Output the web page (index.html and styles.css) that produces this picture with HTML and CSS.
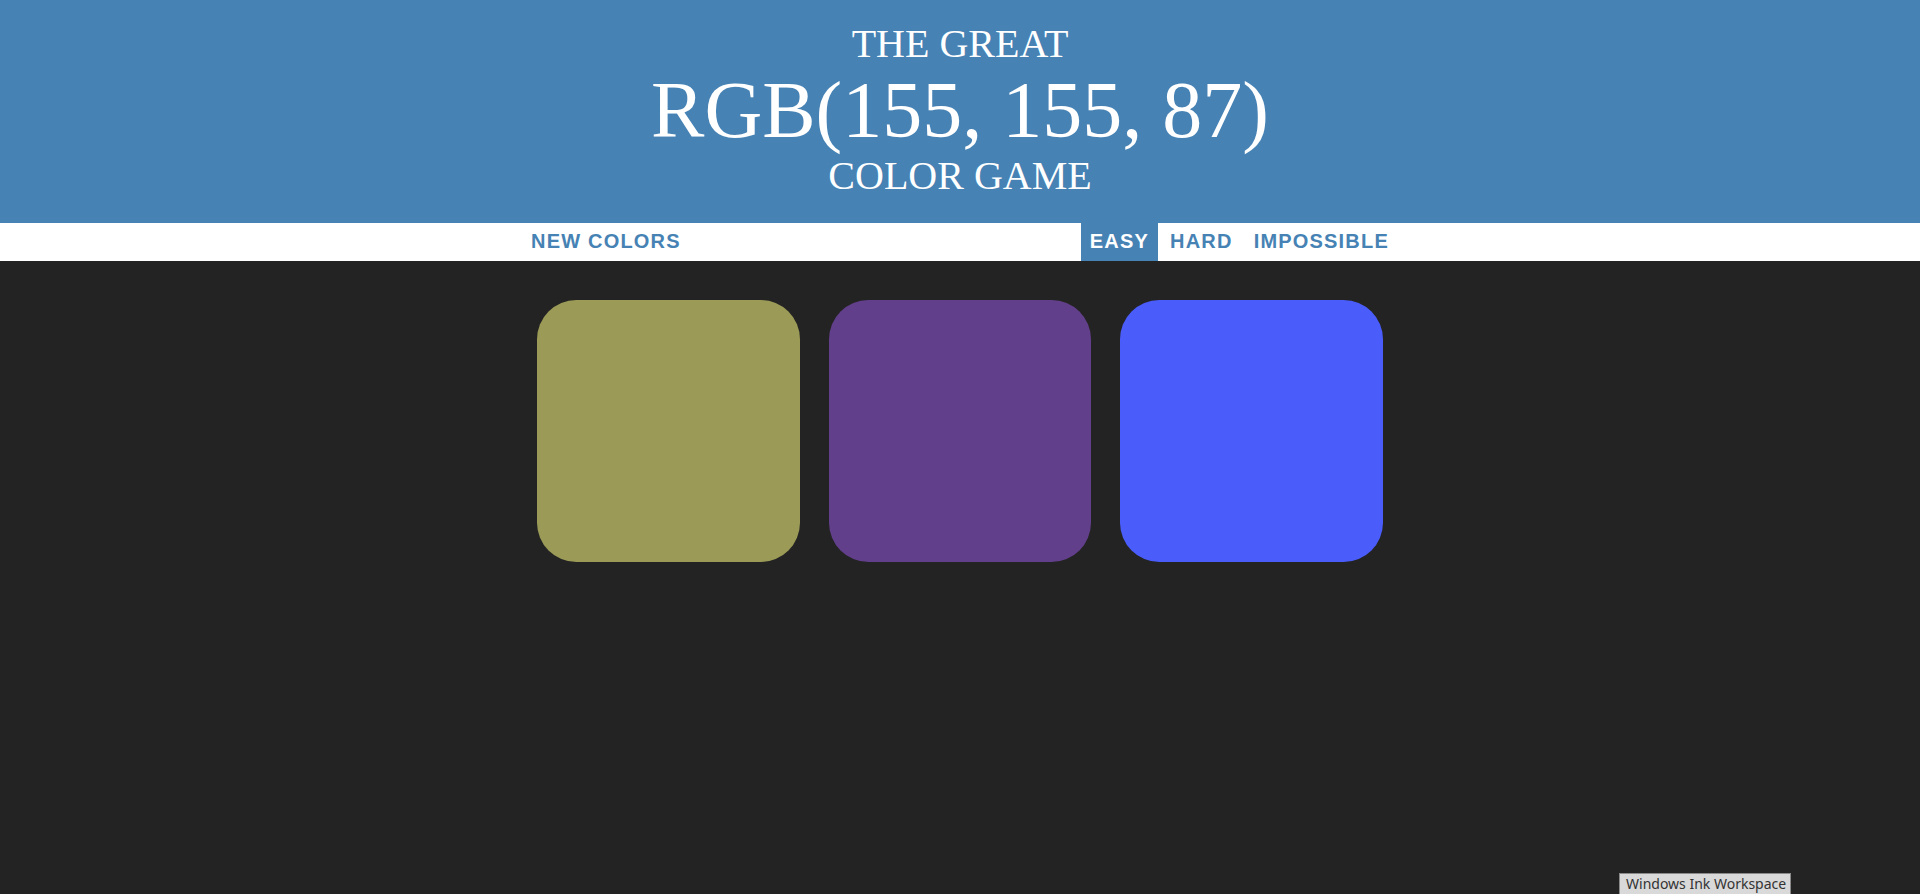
FILE: index.html
```html
<!DOCTYPE html>
<html lang="en">
<head>
<meta charset="utf-8">
<title>Color Game</title>
<link rel="stylesheet" href="styles.css">
</head>
<body>
<header class="banner">
  <div class="title-top">The Great</div>
  <div class="title-rgb">RGB(155, 155, 87)</div>
  <div class="title-bottom">Color Game</div>
</header>
<nav class="stripe">
  <div class="stripe-inner">
    <button class="btn">New Colors</button>
    <span class="message"></span>
    <div class="modes">
      <button class="btn btn-selected">Easy</button>
      <button class="btn">Hard</button>
      <button class="btn">Impossible</button>
    </div>
  </div>
</nav>
<main class="board">
  <div class="square" style="background: rgb(155, 155, 87);"></div>
  <div class="square" style="background: rgb(98, 63, 138);"></div>
  <div class="square" style="background: rgb(74, 93, 251);"></div>
</main>
<div class="sys-tooltip">Windows Ink Workspace</div>
</body>
</html>
```
FILE: styles.css
```css
html, body {
  margin: 0;
  padding: 0;
}
body {
  background: #232323;
  height: 894px;
  overflow: hidden;
  font-family: "Liberation Sans", Arial, sans-serif;
}
.banner {
  background: #4682b4;
  color: #fff;
  text-align: center;
  text-transform: uppercase;
  font-family: "Liberation Serif", "Times New Roman", serif;
  font-weight: normal;
  padding: 22px 0 25px;
}
.title-top,
.title-bottom {
  font-size: 40px;
  line-height: 44px;
}
.title-rgb {
  font-size: 80px;
  line-height: 88px;
}
.stripe {
  background: #fff;
  height: 38px;
}
.stripe-inner {
  max-width: 875px;
  height: 100%;
  margin: 0 auto;
  display: flex;
  justify-content: space-between;
  align-items: stretch;
}
.modes {
  display: flex;
  gap: 4px;
}
.btn {
  font-family: "Liberation Sans", Arial, sans-serif;
  font-size: 20px;
  font-weight: 700;
  letter-spacing: 1.2px;
  text-transform: uppercase;
  color: #4682b4;
  background: none;
  border: none;
  outline: none;
  height: 100%;
  padding: 0 8.5px 2px;
  margin: 0;
}
.btn-selected {
  background: #4682b4;
  color: #fff;
}
.board {
  max-width: 875px;
  margin: 24px auto 0;
  display: flex;
  flex-wrap: wrap;
}
.square {
  width: 30%;
  aspect-ratio: 1 / 1;
  margin: 1.66%;
  border-radius: 15%;
}
.sys-tooltip {
  position: fixed;
  left: 1619px;
  top: 873px;
  width: 172px;
  height: 24px;
  box-sizing: border-box;
  background: #d9d9d9;
  border: 1px solid #8a8a8a;
  color: #333;
  font-family: "Noto Sans", sans-serif;
  font-size: 14px;
  line-height: 20px;
  padding: 0 0 0 6px;
  white-space: nowrap;
}
```
